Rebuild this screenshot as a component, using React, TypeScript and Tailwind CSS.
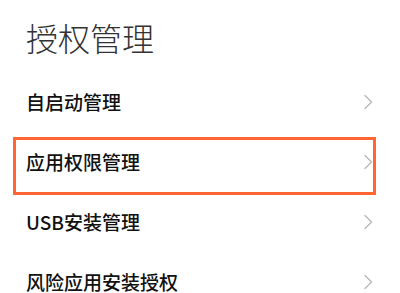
import React from "react";

const Chevron = () => (
  <svg width="10" height="16" viewBox="0 0 10 16" className="shrink-0">
    <path d="M2 1.5 L8.5 8 L2 14.5" fill="none" stroke="#b8b8b8" strokeWidth="1.4" strokeLinecap="round" strokeLinejoin="round" />
  </svg>
);

const rows = ["自启动管理", "应用权限管理", "USB安装管理", "风险应用安装授权"];

export default function App() {
  return (
    <div
      className="w-[400px] h-[293px] bg-white overflow-hidden"
      style={{ fontFamily: '"Noto Sans CJK SC", "Noto Sans", sans-serif' }}
    >
      <div className="h-[72px] pl-[26px] pt-[17px]">
        <div className="text-[32px] leading-[40px] font-light text-[#333333]">授权管理</div>
      </div>
      {rows.map((r, i) => (
        <div key={r} className="relative h-[60px] flex items-center justify-between pl-[26px] pr-[27px]">
          <span className="text-[19px] leading-[20px] font-medium text-[#111111]">{r}</span>
          <Chevron />
          {i === 1 && (
            <div className="absolute left-[13px] top-[5px] w-[363px] h-[58px] border-[3px] border-[#ff6633]" />
          )}
        </div>
      ))}
    </div>
  );
}
